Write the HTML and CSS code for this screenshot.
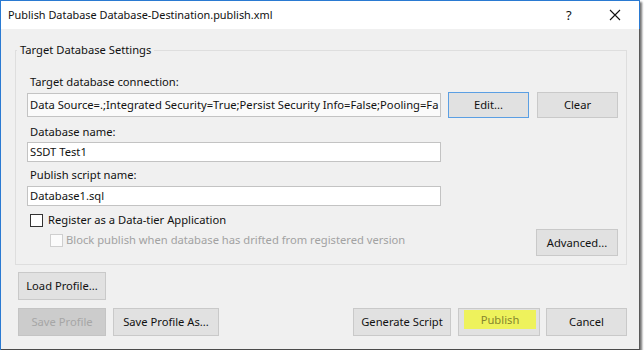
FILE: index.html
```html
<!DOCTYPE html>
<html>
<head>
<meta charset="utf-8">
<link rel="stylesheet" href="styles.css">
</head>
<body>
<div class="window">
  <div class="titlebar">
    <span class="title">Publish Database Database-Destination.publish.xml</span>
    <span class="help">?</span>
    <span class="close"><svg width="12" height="12" viewBox="0 0 12 12"><path d="M1 1 L11 11 M11 1 L1 11" stroke="#111" stroke-width="1.1" fill="none"/></svg></span>
  </div>
  <div class="content">
    <div class="group">
      <span class="legend">Target Database Settings</span>
      <div class="label">Target database connection:</div>
      <div class="conn-row">
        <div class="input conn"><span class="conn-text">Data Source=.;Integrated Security=True;Persist Security Info=False;Pooling=Fa</span></div>
        <button class="btn edit">Edit...</button>
        <button class="btn clear">Clear</button>
      </div>
      <div class="label l2">Database name:</div>
      <div class="input field f2">SSDT Test1</div>
      <div class="label l3">Publish script name:</div>
      <div class="input field f3">Database1.sql</div>
      <div class="check-row">
        <span class="checkbox"></span>
        <span class="check-text">Register as a Data-tier Application</span>
      </div>
      <div class="adv-row">
        <div class="check-row sub">
          <span class="checkbox disabled"></span>
          <span class="check-text dim">Block publish when database has drifted from registered version</span>
        </div>
        <button class="btn advanced">Advanced...</button>
      </div>
    </div>
    <div class="load-row">
      <button class="btn profile">Load Profile...</button>
    </div>
    <div class="bottom-row">
      <div class="btn-group">
        <button class="btn profile disabled-btn">Save Profile</button>
        <button class="btn save-as">Save Profile As...</button>
      </div>
      <div class="btn-group right">
        <button class="btn generate">Generate Script</button>
        <button class="btn publish"><span class="hl">Publish</span></button>
        <button class="btn cancel">Cancel</button>
      </div>
    </div>
  </div>
</div>
</body>
</html>
```
FILE: styles.css
```css
* { box-sizing: border-box; }
html, body { margin: 0; padding: 0; background: #ffffff; }
body {
  font-family: "Noto Sans", "Open Sans", sans-serif;
  font-size: 11.2px;
  line-height: 16px;
  color: #111;
}
.window {
  width: 640px;
  border-left: 1px solid #2a7ad2;
  border-top: 1px solid #2a7ad2;
  box-shadow: 2px 2px 2px rgba(0,0,0,0.55);
}
.titlebar {
  height: 28px;
  background: #ffffff;
  border-right: 1px solid #2a7ad2;
  display: flex;
  align-items: center;
  padding-left: 7px;
}
.title { flex: 1; font-size: 10.9px; }
.help { width: 14px; font-size: 13px; margin-right: 29px; }
.close { width: 12px; height: 12px; margin-right: 18px; display: flex; }
.content {
  height: 321px;
  background: #f0f0f0;
  border-right: 1px solid #5a5a5a;
  border-bottom: 1px solid #4a4a4a;
  padding: 21px 12px 0 14px;
}
.group {
  position: relative;
  border: 1px solid #dedede;
  padding: 23px 8px 8px 11px;
}
.legend {
  position: absolute;
  top: -9px;
  left: 1px;
  padding: 0 3px;
  background: #f0f0f0;
}
.label { margin-left: 3px; height: 16px; }
.conn-row { display: flex; align-items: center; height: 26px; margin-top: 2px; }
.input {
  background: #ffffff;
  border: 1px solid #c3c3c3;
  padding: 0 2px;
  white-space: nowrap;
  overflow: hidden;
  width: 414px;
  display: flex;
  align-items: center;
}
.conn { height: 24px; background: #fafafa; flex: none; }
.conn-text { white-space: nowrap; }
.field { height: 20px; }
.l2 { margin-top: 6px; }
.f2 { margin-top: 2px; }
.l3 { margin-top: 5px; }
.f3 { margin-top: 3px; }
.btn {
  font: inherit;
  color: #111;
  background: #e1e1e1;
  border: 1px solid #c9c9c9;
  padding: 0;
  height: 27px;
  display: flex;
  align-items: center;
  justify-content: center;
  flex: none;
}
.edit { width: 81px; height: 26px; margin-left: 7px; border-color: #5b9fe3; }
.clear { width: 81px; height: 26px; margin-left: 8px; }
.check-row { display: flex; align-items: center; height: 16px; margin-top: 6px; margin-left: 3px; }
.checkbox {
  width: 13px;
  height: 13px;
  border: 1px solid #333;
  background: #fff;
  margin-right: 5px;
  flex: none;
}
.checkbox.disabled { border-color: #cfcfcf; background: #fbfbfb; margin-right: 3px; }
.dim { color: #a2a2a2; }
.adv-row { display: flex; justify-content: space-between; align-items: flex-start; margin-top: 1px; }
.check-row.sub { margin-top: 3px; margin-left: 23px; }
.advanced { width: 82px; }
.load-row { margin-top: 7px; margin-left: 3px; }
.profile { width: 88px; height: 28px; }
.bottom-row {
  display: flex;
  justify-content: space-between;
  margin-top: 8px;
  margin-left: 3px;
}
.btn-group { display: flex; gap: 7px; }
.disabled-btn { background: #cccccc; border-color: #c4c4c4; color: #a6a6a6; }
.save-as { width: 106px; height: 28px; }
.generate { width: 98px; height: 28px; }
.publish {
  width: 82px;
  height: 28px;
  align-items: flex-start;
  padding: 1px 3px 6px 5px;
}
.hl {
  flex: 1;
  height: 19px;
  background: #eef25c;
  color: #86862e;
  display: flex;
  align-items: center;
  justify-content: center;
}
.cancel { width: 81px; height: 28px; margin-left: -1px; }
```
